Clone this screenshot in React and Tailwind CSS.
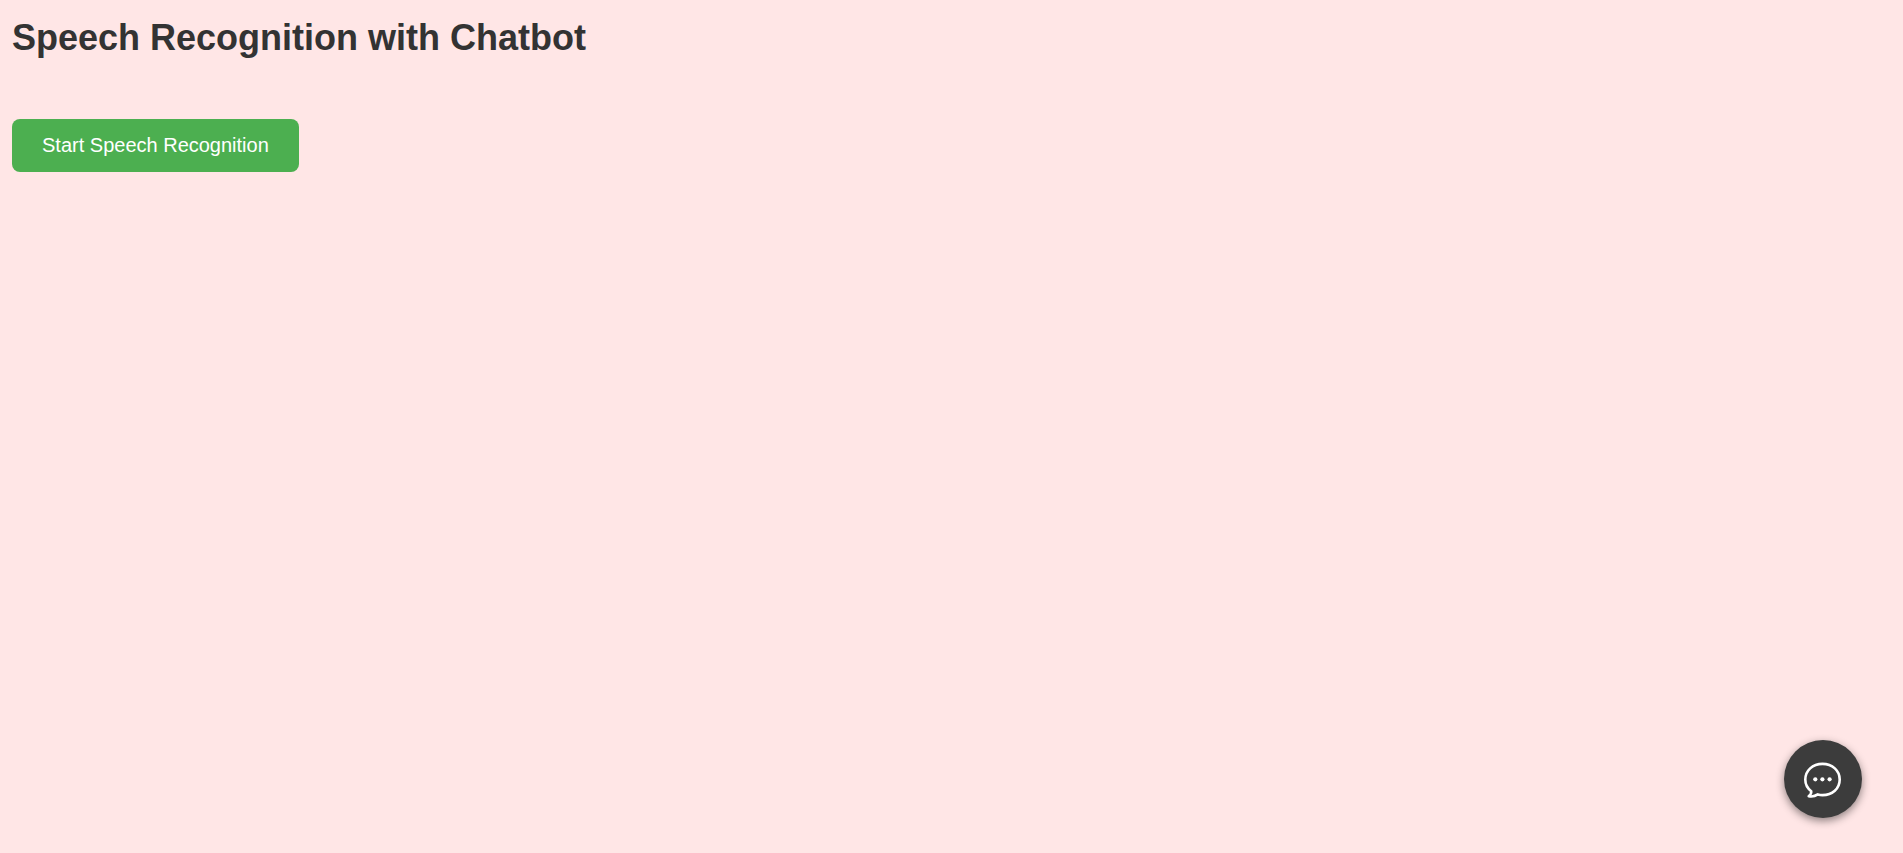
export default function App() {
  return (
    <main className="flex min-h-screen flex-col items-start bg-[#ffe6e6] px-3 pt-4 font-['Liberation_Sans',Arial,sans-serif]">
      <h1 className="text-4xl leading-[44px] font-bold text-[#333333]">
        Speech Recognition with Chatbot
      </h1>
      <button
        type="button"
        className="mt-[59px] cursor-pointer rounded-lg bg-[#4caf50] px-[30px] py-[15px] text-xl leading-[23px] text-white"
      >
        Start Speech Recognition
      </button>
      <button
        type="button"
        aria-label="Open chat"
        className="fixed right-[41px] bottom-[35px] flex size-[78px] cursor-pointer items-center justify-center rounded-full bg-[#3c3c3c] shadow-[0_3px_8px_rgba(0,0,0,0.45)]"
      >
        <svg viewBox="0 0 40 40" className="size-10" fill="none" stroke="white" strokeWidth="2.6" strokeLinecap="round" strokeLinejoin="round" aria-hidden="true">
          <path d="M8.2 32.2C4.400 29.400 2.300 25.200 2.300 20.600C2.300 11.500 9.600 4.900 19.500 4.900C29.400 4.900 36.700 11.600 36.700 20.500C36.700 29.600 29.400 36.100 19.500 36.100C17.800 36.100 16.500 35.900 14.800 35.400C12 37.300 9 37.800 5.700 37.200C7.700 35.700 8.500 34.200 8.200 32.200Z" />
          <g fill="white" stroke="none">
            <circle cx="12.3" cy="20.3" r="2.1" />
            <circle cx="19.4" cy="20.3" r="2.1" />
            <circle cx="26.6" cy="20.3" r="2.1" />
          </g>
        </svg>
      </button>
    </main>
  );
}
